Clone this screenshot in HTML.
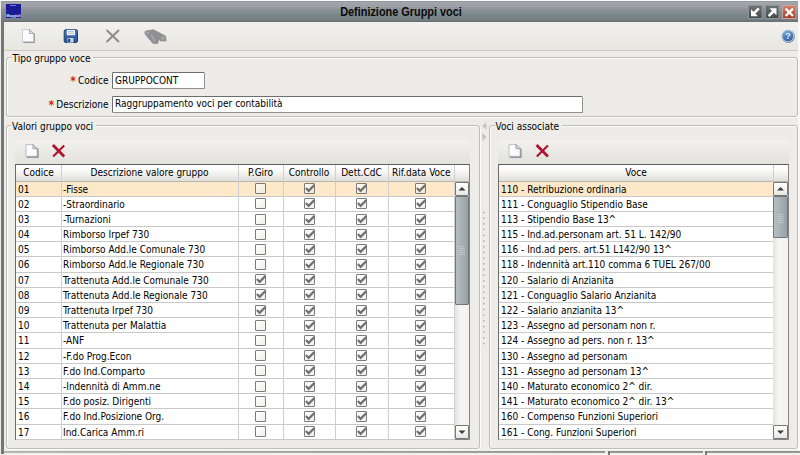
<!DOCTYPE html>
<html lang="it">
<head>
<meta charset="utf-8">
<title>Definizione Gruppi voci</title>
<style>
html,body{margin:0;padding:0;}
body{width:800px;height:455px;overflow:hidden;position:relative;background:#edece8;
 font-family:"DejaVu Sans Condensed","Liberation Sans",sans-serif;font-size:10px;color:#000;}
div,span{box-sizing:border-box;}
.abs,.t,.row,.hl,.vl,.cb,.fs,.lg{position:absolute;}
.t{white-space:nowrap;height:15.2px;}
.row{background:#ffffff;}
.row.sel{background:#fde9c9;}
.hl{height:1px;background:#c9c9c9;}
.hl.hd0{background:#b4b4b0;}
.vl{width:1px;background:#cfcfcf;}
.cb{width:11px;height:11px;border:1px solid #7b7b7b;background:linear-gradient(135deg,rgba(255,255,255,.75),rgba(228,228,226,.6));border-radius:1px;}
.cb svg{position:absolute;left:-1px;top:-1px;}
.fs{border:1px solid #bebdb8;border-radius:3px;box-shadow:inset 1px 1px 0 #fbfbf9, 1px 1px 0 #fbfbf9;}
.lg{background:#edece8;white-space:nowrap;line-height:12px;height:12px;padding:0 3px 0 1px;}
#title{left:0.6px;top:1px;width:798px;height:21px;
 background:linear-gradient(#8f9397 0%,#a1a5ac 7%,#9a9ea5 28%,#8b9196 42%,#848d90 55%,#78858b 70%,#768186 86%,#686f72 100%);}
#titletxt{font-family:"Liberation Sans",sans-serif;left:1.3px;top:1.6px;width:800px;height:21px;line-height:21px;text-align:center;font-weight:bold;font-size:12.5px;transform:scaleX(0.872);transform-origin:50% 50%;color:#0a0a0a;}
#lborder{left:0.5px;top:22px;width:3.5px;height:432px;background:#70787b;}
#toolbar{left:4px;top:22px;width:794px;height:28.5px;background:linear-gradient(#f2f1ee,#e7e6e1);border-bottom:1px solid #cbcac5;}
.mtb{height:24.5px;background:linear-gradient(#f2f1ee 0%,#edece8 30%,#e2e1dc 100%);}
.th{background:linear-gradient(#ffffff 0%,#fbfbfa 30%,#eeedea 65%,#dfded9 100%);border-bottom:1px solid #bdbdb8;}
.tbl{border:1px solid #858585;border-top-color:#5c5c5c;border-left-color:#6c6c6c;background:#fff;}
.hd{text-align:center;line-height:16px;height:16px;top:165.2px;white-space:nowrap;}
.ast{color:#d31c1c;font-weight:bold;font-size:12px;margin-right:2px;vertical-align:-1px;}
.nar{display:inline-block;transform:scaleX(1);transform-origin:0 50%;}
.inp{background:#fff;border:1px solid #8f8f8f;border-top-color:#6e6e6e;border-left-color:#6e6e6e;height:17px;line-height:15px;padding-top:0.4px;padding-left:2.5px;border-radius:1.5px;white-space:nowrap;}
.sbtrack{background:linear-gradient(90deg,#e4e3df,#f6f5f3 40%,#f3f2ef);}
.sbbtn{background:linear-gradient(#ffffff,#f4f4f2 50%,#e6e6e3);border:1px solid #777777;border-radius:1px;}
.thumb{background:linear-gradient(90deg,#b6bec2 0%,#a8b2b6 45%,#98a2a6 100%);border:1px solid #70777a;border-radius:1px;}
</style>
</head>
<body>
<!-- window chrome -->
<div class="abs" style="left:0;top:0;width:800px;height:1px;background:#fbfbfb"></div>
<div class="abs" id="title"></div>
<div class="abs" id="titletxt">Definizione Gruppi voci</div>
<!-- app icon -->
<div class="abs" style="left:5.5px;top:3.8px;width:15.2px;height:14.2px;background:#1b1b96;"></div>
<div class="abs" style="left:6.2px;top:13.8px;width:14.5px;height:4px;font-size:3.6px;line-height:4px;font-weight:bold;color:#e2e6ff;overflow:hidden;font-family:'Liberation Sans',sans-serif">Maggioli</div>
<div class="abs" style="left:10px;top:5px;width:6px;height:1px;background:#6f78d8"></div>
<!-- title buttons -->
<svg class="abs" style="left:748px;top:4.5px" width="50" height="15" viewBox="0 0 50 15">
 <defs>
  <linearGradient id="gb" x1="0" y1="0" x2="0" y2="1"><stop offset="0" stop-color="#6f7577"/><stop offset="1" stop-color="#42484a"/></linearGradient>
  <linearGradient id="gr" x1="0" y1="0" x2="0" y2="1"><stop offset="0" stop-color="#d9826a"/><stop offset="1" stop-color="#a33a2a"/></linearGradient>
 </defs>
 <rect x="0.5" y="0.5" width="13.5" height="13" fill="url(#gb)" stroke="#8d9496" stroke-width="1"/>
 <path d="M3 4.2 V11.2 H10 Z" fill="#fff"/><path d="M5.6 8.6 L10.8 3.4" stroke="#fff" stroke-width="2.6" fill="none"/>
 <rect x="17.5" y="0.5" width="13.5" height="13" fill="url(#gb)" stroke="#8d9496" stroke-width="1"/>
 <path d="M21.5 3.3 H28.5 V10.3 Z" fill="#fff"/><path d="M20.6 11.2 L25.8 6" stroke="#fff" stroke-width="2.6" fill="none"/>
 <rect x="34.5" y="0.5" width="13.5" height="13" fill="url(#gr)" stroke="#c9a79f" stroke-width="1"/>
 <path d="M37.6 3.6 L45 11 M45 3.6 L37.6 11" stroke="#fff" stroke-width="2.2" fill="none"/>
</svg>
<div class="abs" id="lborder"></div>
<div class="abs" style="left:798px;top:0;width:2px;height:455px;background:#f8f8f8"></div>

<!-- toolbar -->
<div class="abs" id="toolbar"></div>
<svg class="abs" style="left:20px;top:27px" width="150" height="20" viewBox="0 0 150 20">
 <!-- new doc -->
 <path d="M14.1 6.3 V15.3 H3.3" fill="none" stroke="#8f8f8f" stroke-width="1.4"/>
 <path d="M2.5 2.5 H9.5 L13.5 6.5 V14.7 H2.5 Z" fill="#fbfcfe" stroke="#bfc3c9" stroke-width="0.8"/>
 <path d="M9.5 2.5 V6.5 H13.5 Z" fill="#e1e5ec" stroke="#9c9c9c" stroke-width="0.8"/>
 <!-- save -->
 <defs><linearGradient id="sv" x1="0" y1="0" x2="0" y2="1"><stop offset="0" stop-color="#4a78b6"/><stop offset="1" stop-color="#27528f"/></linearGradient></defs>
 <rect x="44.2" y="2.7" width="13.3" height="12.8" rx="1.6" fill="url(#sv)" stroke="#1d3c74" stroke-width="1"/>
 <rect x="46.8" y="2.9" width="8.2" height="5.3" fill="#f3f6fa"/>
 <path d="M48 4.6 H54 M48 6.3 H54" stroke="#9fabbf" stroke-width="0.8"/>
 <rect x="47.5" y="11" width="5.9" height="4.6" fill="#ccd6e6"/>
 <rect x="48.1" y="11.8" width="2.2" height="3.3" fill="#1f447e"/>
 <!-- delete (disabled) -->
 <path d="M86.5 3 L99 15 M99 3 L86.5 15" stroke="#8d8d8d" stroke-width="2" fill="none"/>
 <!-- binoculars (disabled) -->
 <path d="M125 4.4 L128 3.5 L133.5 2.8 L145.6 9.1 L146.1 13.9 L140.3 13.9 L138.7 12 L137.7 16.5 L133 16.5 L125 7 Z" fill="#8f8f91" stroke="#8f8f91" stroke-width="0.8" stroke-linejoin="round"/>
 <circle cx="127.6" cy="6" r="1.5" fill="#a9a9ab"/><circle cx="143" cy="11.2" r="1.7" fill="#a9a9ab"/><path d="M131 8 L135 14.5" stroke="#a2a2a8" stroke-width="2.2"/>
</svg>
<!-- help -->
<svg class="abs" style="left:780px;top:28px" width="16" height="16" viewBox="0 0 16 16">
 <defs><linearGradient id="hg" x1="0.2" y1="0" x2="0.6" y2="1"><stop offset="0" stop-color="#8ab4de"/><stop offset="0.5" stop-color="#4f82bc"/><stop offset="1" stop-color="#2f5f98"/></linearGradient></defs>
 <circle cx="8.3" cy="8.4" r="6.5" fill="#6d7a88"/>
 <circle cx="7.9" cy="7.9" r="6" fill="url(#hg)" stroke="#c6d6e8" stroke-width="1"/>
 <text x="7.9" y="11.1" text-anchor="middle" font-family="Liberation Sans, sans-serif" font-weight="bold" font-size="9.5" fill="#dcecfb">?</text>
</svg>

<!-- fieldset 1 -->
<div class="fs" style="left:5.5px;top:56.5px;width:792.5px;height:60.6px"></div>
<div class="lg" style="left:11.5px;top:53px">Tipo gruppo voce</div>
<div class="t" style="left:60px;top:72.8px;width:48.5px;text-align:right;line-height:15.2px"><span class="ast">*</span>Codice</div>
<div class="t" style="left:30px;top:96.8px;width:78.5px;text-align:right;line-height:15.2px"><span class="ast">*</span>Descrizione</div>
<div class="abs inp" style="left:111.5px;top:72px;height:16.5px;width:93.5px"><span class="nar">GRUPPOCONT</span></div>
<div class="abs inp" style="left:111.5px;top:95.5px;padding-top:0;line-height:14.6px;width:471.5px">Raggruppamento voci per contabilità</div>

<!-- fieldset 2 -->
<div class="fs" style="left:5.5px;top:125px;width:474.5px;height:323.5px"></div>
<div class="lg" style="left:11px;top:120.5px">Valori gruppo voci</div>
<div class="abs mtb" style="left:15px;top:139.5px;width:455px"></div>
<svg class="abs" style="left:22px;top:142px" width="50" height="18" viewBox="0 0 50 18">
 <path d="M15.8 6.6 V15 H4.8" fill="none" stroke="#7c7c7c" stroke-width="1.4"/>
 <path d="M4 2.6 H11 L15.1 6.7 V14.3 H4 Z" fill="#fbfcfe" stroke="#aeb2b8" stroke-width="0.8"/>
 <path d="M11 2.6 V6.7 H15.1 Z" fill="#e1e5ec" stroke="#8c8c8c" stroke-width="0.8"/>
 <path d="M30.9 2.9 L42.2 14.5" stroke="#b01330" stroke-width="2.8" fill="none"/><path d="M42.2 3.6 L31.1 14.5" stroke="#b01330" stroke-width="2.1" fill="none"/>
</svg>

<!-- splitter -->
<svg class="abs" style="left:481px;top:120px" width="9" height="325" viewBox="0 0 9 325">
 <path d="M5.3 2.4 L1.2 5.9 L5.3 9.4 Z" fill="#c2c2be"/>
 <path d="M1.4 13.2 L5.5 17 L1.4 20.8 Z" fill="#c2c2be"/>
 <circle cx="2.8" cy="92.5" r="0.9" fill="#b2b2ae"/><circle cx="2.8" cy="98.2" r="0.9" fill="#b2b2ae"/><circle cx="2.8" cy="103.9" r="0.9" fill="#b2b2ae"/><circle cx="2.8" cy="109.6" r="0.9" fill="#b2b2ae"/><circle cx="2.8" cy="115.3" r="0.9" fill="#b2b2ae"/><circle cx="2.8" cy="121.0" r="0.9" fill="#b2b2ae"/><circle cx="2.8" cy="126.7" r="0.9" fill="#b2b2ae"/><circle cx="2.8" cy="132.4" r="0.9" fill="#b2b2ae"/><circle cx="2.8" cy="138.1" r="0.9" fill="#b2b2ae"/><circle cx="2.8" cy="143.8" r="0.9" fill="#b2b2ae"/><circle cx="2.8" cy="149.5" r="0.9" fill="#b2b2ae"/><circle cx="2.8" cy="155.2" r="0.9" fill="#b2b2ae"/><circle cx="2.8" cy="160.9" r="0.9" fill="#b2b2ae"/><circle cx="2.8" cy="166.6" r="0.9" fill="#b2b2ae"/><circle cx="2.8" cy="172.3" r="0.9" fill="#b2b2ae"/><circle cx="2.8" cy="178.0" r="0.9" fill="#b2b2ae"/><circle cx="2.8" cy="183.7" r="0.9" fill="#b2b2ae"/><circle cx="2.8" cy="189.4" r="0.9" fill="#b2b2ae"/><circle cx="2.8" cy="195.1" r="0.9" fill="#b2b2ae"/><circle cx="2.8" cy="200.8" r="0.9" fill="#b2b2ae"/><circle cx="2.8" cy="206.5" r="0.9" fill="#b2b2ae"/><circle cx="2.8" cy="212.2" r="0.9" fill="#b2b2ae"/><circle cx="2.8" cy="217.9" r="0.9" fill="#b2b2ae"/><circle cx="2.8" cy="223.6" r="0.9" fill="#b2b2ae"/>
</svg>

<!-- fieldset 3 -->
<div class="fs" style="left:489px;top:125px;width:309px;height:323.5px"></div>
<div class="lg" style="left:494.5px;top:120.5px">Voci associate</div>
<div class="abs mtb" style="left:498px;top:139.5px;width:290.5px"></div>
<svg class="abs" style="left:505px;top:142px" width="50" height="18" viewBox="0 0 50 18">
 <path d="M15.8 6.6 V15 H4.8" fill="none" stroke="#7c7c7c" stroke-width="1.4"/>
 <path d="M4 2.6 H11 L15.1 6.7 V14.3 H4 Z" fill="#fbfcfe" stroke="#aeb2b8" stroke-width="0.8"/>
 <path d="M11 2.6 V6.7 H15.1 Z" fill="#e1e5ec" stroke="#8c8c8c" stroke-width="0.8"/>
 <path d="M31.6 2.9 L42.9 14.5" stroke="#b01330" stroke-width="2.8" fill="none"/><path d="M42.9 3.6 L31.8 14.5" stroke="#b01330" stroke-width="2.1" fill="none"/>
</svg>

<!-- left table -->
<div class="abs tbl" style="left:15px;top:164px;width:455px;height:276px"></div>
<div class="abs th" style="left:16px;top:165px;width:453px;height:17px"></div>
<!-- right table -->
<div class="abs tbl" style="left:498px;top:164px;width:290.5px;height:276px"></div>
<div class="abs th" style="left:499px;top:165px;width:288.5px;height:17px"></div>

<div class="row sel" style="left:16px;top:181.0px;width:439px;height:15.19px"></div>
<div class="t" style="left:18px;top:181.5px;line-height:15.19px">01</div>
<div class="t" style="left:63px;top:181.5px;line-height:15.19px">-Fisse</div>
<div class="cb" style="left:255.0px;top:183.1px"></div>
<div class="cb" style="left:303.8px;top:183.1px"><svg width="11" height="11" viewBox="0 0 11 11"><path d="M1.9 5.1 L4.6 7.9 L10.4 2.1" fill="none" stroke="#6f6f6f" stroke-width="2.2"/></svg></div>
<div class="cb" style="left:355.8px;top:183.1px"><svg width="11" height="11" viewBox="0 0 11 11"><path d="M1.9 5.1 L4.6 7.9 L10.4 2.1" fill="none" stroke="#6f6f6f" stroke-width="2.2"/></svg></div>
<div class="cb" style="left:415.1px;top:183.1px"><svg width="11" height="11" viewBox="0 0 11 11"><path d="M1.9 5.1 L4.6 7.9 L10.4 2.1" fill="none" stroke="#6f6f6f" stroke-width="2.2"/></svg></div>
<div class="row" style="left:16px;top:196.2px;width:439px;height:15.19px"></div>
<div class="t" style="left:18px;top:196.7px;line-height:15.19px">02</div>
<div class="t" style="left:63px;top:196.7px;line-height:15.19px">-Straordinario</div>
<div class="cb" style="left:255.0px;top:198.3px"></div>
<div class="cb" style="left:303.8px;top:198.3px"><svg width="11" height="11" viewBox="0 0 11 11"><path d="M1.9 5.1 L4.6 7.9 L10.4 2.1" fill="none" stroke="#6f6f6f" stroke-width="2.2"/></svg></div>
<div class="cb" style="left:355.8px;top:198.3px"><svg width="11" height="11" viewBox="0 0 11 11"><path d="M1.9 5.1 L4.6 7.9 L10.4 2.1" fill="none" stroke="#6f6f6f" stroke-width="2.2"/></svg></div>
<div class="cb" style="left:415.1px;top:198.3px"><svg width="11" height="11" viewBox="0 0 11 11"><path d="M1.9 5.1 L4.6 7.9 L10.4 2.1" fill="none" stroke="#6f6f6f" stroke-width="2.2"/></svg></div>
<div class="row" style="left:16px;top:211.4px;width:439px;height:15.19px"></div>
<div class="t" style="left:18px;top:211.9px;line-height:15.19px">03</div>
<div class="t" style="left:63px;top:211.9px;line-height:15.19px">-Turnazioni</div>
<div class="cb" style="left:255.0px;top:213.5px"></div>
<div class="cb" style="left:303.8px;top:213.5px"><svg width="11" height="11" viewBox="0 0 11 11"><path d="M1.9 5.1 L4.6 7.9 L10.4 2.1" fill="none" stroke="#6f6f6f" stroke-width="2.2"/></svg></div>
<div class="cb" style="left:355.8px;top:213.5px"><svg width="11" height="11" viewBox="0 0 11 11"><path d="M1.9 5.1 L4.6 7.9 L10.4 2.1" fill="none" stroke="#6f6f6f" stroke-width="2.2"/></svg></div>
<div class="cb" style="left:415.1px;top:213.5px"><svg width="11" height="11" viewBox="0 0 11 11"><path d="M1.9 5.1 L4.6 7.9 L10.4 2.1" fill="none" stroke="#6f6f6f" stroke-width="2.2"/></svg></div>
<div class="row" style="left:16px;top:226.6px;width:439px;height:15.19px"></div>
<div class="t" style="left:18px;top:227.1px;line-height:15.19px">04</div>
<div class="t" style="left:63px;top:227.1px;line-height:15.19px">Rimborso Irpef 730</div>
<div class="cb" style="left:255.0px;top:228.7px"></div>
<div class="cb" style="left:303.8px;top:228.7px"><svg width="11" height="11" viewBox="0 0 11 11"><path d="M1.9 5.1 L4.6 7.9 L10.4 2.1" fill="none" stroke="#6f6f6f" stroke-width="2.2"/></svg></div>
<div class="cb" style="left:355.8px;top:228.7px"><svg width="11" height="11" viewBox="0 0 11 11"><path d="M1.9 5.1 L4.6 7.9 L10.4 2.1" fill="none" stroke="#6f6f6f" stroke-width="2.2"/></svg></div>
<div class="cb" style="left:415.1px;top:228.7px"><svg width="11" height="11" viewBox="0 0 11 11"><path d="M1.9 5.1 L4.6 7.9 L10.4 2.1" fill="none" stroke="#6f6f6f" stroke-width="2.2"/></svg></div>
<div class="row" style="left:16px;top:241.8px;width:439px;height:15.19px"></div>
<div class="t" style="left:18px;top:242.3px;line-height:15.19px">05</div>
<div class="t" style="left:63px;top:242.3px;line-height:15.19px">Rimborso Add.le Comunale 730</div>
<div class="cb" style="left:255.0px;top:243.9px"></div>
<div class="cb" style="left:303.8px;top:243.9px"><svg width="11" height="11" viewBox="0 0 11 11"><path d="M1.9 5.1 L4.6 7.9 L10.4 2.1" fill="none" stroke="#6f6f6f" stroke-width="2.2"/></svg></div>
<div class="cb" style="left:355.8px;top:243.9px"><svg width="11" height="11" viewBox="0 0 11 11"><path d="M1.9 5.1 L4.6 7.9 L10.4 2.1" fill="none" stroke="#6f6f6f" stroke-width="2.2"/></svg></div>
<div class="cb" style="left:415.1px;top:243.9px"><svg width="11" height="11" viewBox="0 0 11 11"><path d="M1.9 5.1 L4.6 7.9 L10.4 2.1" fill="none" stroke="#6f6f6f" stroke-width="2.2"/></svg></div>
<div class="row" style="left:16px;top:256.9px;width:439px;height:15.19px"></div>
<div class="t" style="left:18px;top:257.4px;line-height:15.19px">06</div>
<div class="t" style="left:63px;top:257.4px;line-height:15.19px">Rimborso Add.le Regionale 730</div>
<div class="cb" style="left:255.0px;top:259.0px"></div>
<div class="cb" style="left:303.8px;top:259.0px"><svg width="11" height="11" viewBox="0 0 11 11"><path d="M1.9 5.1 L4.6 7.9 L10.4 2.1" fill="none" stroke="#6f6f6f" stroke-width="2.2"/></svg></div>
<div class="cb" style="left:355.8px;top:259.0px"><svg width="11" height="11" viewBox="0 0 11 11"><path d="M1.9 5.1 L4.6 7.9 L10.4 2.1" fill="none" stroke="#6f6f6f" stroke-width="2.2"/></svg></div>
<div class="cb" style="left:415.1px;top:259.0px"><svg width="11" height="11" viewBox="0 0 11 11"><path d="M1.9 5.1 L4.6 7.9 L10.4 2.1" fill="none" stroke="#6f6f6f" stroke-width="2.2"/></svg></div>
<div class="row" style="left:16px;top:272.1px;width:439px;height:15.19px"></div>
<div class="t" style="left:18px;top:272.6px;line-height:15.19px">07</div>
<div class="t" style="left:63px;top:272.6px;line-height:15.19px">Trattenuta Add.le Comunale 730</div>
<div class="cb" style="left:255.0px;top:274.2px"><svg width="11" height="11" viewBox="0 0 11 11"><path d="M1.9 5.1 L4.6 7.9 L10.4 2.1" fill="none" stroke="#6f6f6f" stroke-width="2.2"/></svg></div>
<div class="cb" style="left:303.8px;top:274.2px"><svg width="11" height="11" viewBox="0 0 11 11"><path d="M1.9 5.1 L4.6 7.9 L10.4 2.1" fill="none" stroke="#6f6f6f" stroke-width="2.2"/></svg></div>
<div class="cb" style="left:355.8px;top:274.2px"><svg width="11" height="11" viewBox="0 0 11 11"><path d="M1.9 5.1 L4.6 7.9 L10.4 2.1" fill="none" stroke="#6f6f6f" stroke-width="2.2"/></svg></div>
<div class="cb" style="left:415.1px;top:274.2px"><svg width="11" height="11" viewBox="0 0 11 11"><path d="M1.9 5.1 L4.6 7.9 L10.4 2.1" fill="none" stroke="#6f6f6f" stroke-width="2.2"/></svg></div>
<div class="row" style="left:16px;top:287.3px;width:439px;height:15.19px"></div>
<div class="t" style="left:18px;top:287.8px;line-height:15.19px">08</div>
<div class="t" style="left:63px;top:287.8px;line-height:15.19px">Trattenuta Add.le Regionale 730</div>
<div class="cb" style="left:255.0px;top:289.4px"><svg width="11" height="11" viewBox="0 0 11 11"><path d="M1.9 5.1 L4.6 7.9 L10.4 2.1" fill="none" stroke="#6f6f6f" stroke-width="2.2"/></svg></div>
<div class="cb" style="left:303.8px;top:289.4px"><svg width="11" height="11" viewBox="0 0 11 11"><path d="M1.9 5.1 L4.6 7.9 L10.4 2.1" fill="none" stroke="#6f6f6f" stroke-width="2.2"/></svg></div>
<div class="cb" style="left:355.8px;top:289.4px"><svg width="11" height="11" viewBox="0 0 11 11"><path d="M1.9 5.1 L4.6 7.9 L10.4 2.1" fill="none" stroke="#6f6f6f" stroke-width="2.2"/></svg></div>
<div class="cb" style="left:415.1px;top:289.4px"><svg width="11" height="11" viewBox="0 0 11 11"><path d="M1.9 5.1 L4.6 7.9 L10.4 2.1" fill="none" stroke="#6f6f6f" stroke-width="2.2"/></svg></div>
<div class="row" style="left:16px;top:302.5px;width:439px;height:15.19px"></div>
<div class="t" style="left:18px;top:303.0px;line-height:15.19px">09</div>
<div class="t" style="left:63px;top:303.0px;line-height:15.19px">Trattenuta Irpef 730</div>
<div class="cb" style="left:255.0px;top:304.6px"><svg width="11" height="11" viewBox="0 0 11 11"><path d="M1.9 5.1 L4.6 7.9 L10.4 2.1" fill="none" stroke="#6f6f6f" stroke-width="2.2"/></svg></div>
<div class="cb" style="left:303.8px;top:304.6px"><svg width="11" height="11" viewBox="0 0 11 11"><path d="M1.9 5.1 L4.6 7.9 L10.4 2.1" fill="none" stroke="#6f6f6f" stroke-width="2.2"/></svg></div>
<div class="cb" style="left:355.8px;top:304.6px"><svg width="11" height="11" viewBox="0 0 11 11"><path d="M1.9 5.1 L4.6 7.9 L10.4 2.1" fill="none" stroke="#6f6f6f" stroke-width="2.2"/></svg></div>
<div class="cb" style="left:415.1px;top:304.6px"><svg width="11" height="11" viewBox="0 0 11 11"><path d="M1.9 5.1 L4.6 7.9 L10.4 2.1" fill="none" stroke="#6f6f6f" stroke-width="2.2"/></svg></div>
<div class="row" style="left:16px;top:317.7px;width:439px;height:15.19px"></div>
<div class="t" style="left:18px;top:318.2px;line-height:15.19px">10</div>
<div class="t" style="left:63px;top:318.2px;line-height:15.19px">Trattenuta per Malattia</div>
<div class="cb" style="left:255.0px;top:319.8px"></div>
<div class="cb" style="left:303.8px;top:319.8px"><svg width="11" height="11" viewBox="0 0 11 11"><path d="M1.9 5.1 L4.6 7.9 L10.4 2.1" fill="none" stroke="#6f6f6f" stroke-width="2.2"/></svg></div>
<div class="cb" style="left:355.8px;top:319.8px"><svg width="11" height="11" viewBox="0 0 11 11"><path d="M1.9 5.1 L4.6 7.9 L10.4 2.1" fill="none" stroke="#6f6f6f" stroke-width="2.2"/></svg></div>
<div class="cb" style="left:415.1px;top:319.8px"><svg width="11" height="11" viewBox="0 0 11 11"><path d="M1.9 5.1 L4.6 7.9 L10.4 2.1" fill="none" stroke="#6f6f6f" stroke-width="2.2"/></svg></div>
<div class="row" style="left:16px;top:332.9px;width:439px;height:15.19px"></div>
<div class="t" style="left:18px;top:333.4px;line-height:15.19px">11</div>
<div class="t" style="left:63px;top:333.4px;line-height:15.19px">-ANF</div>
<div class="cb" style="left:255.0px;top:335.0px"></div>
<div class="cb" style="left:303.8px;top:335.0px"><svg width="11" height="11" viewBox="0 0 11 11"><path d="M1.9 5.1 L4.6 7.9 L10.4 2.1" fill="none" stroke="#6f6f6f" stroke-width="2.2"/></svg></div>
<div class="cb" style="left:355.8px;top:335.0px"><svg width="11" height="11" viewBox="0 0 11 11"><path d="M1.9 5.1 L4.6 7.9 L10.4 2.1" fill="none" stroke="#6f6f6f" stroke-width="2.2"/></svg></div>
<div class="cb" style="left:415.1px;top:335.0px"><svg width="11" height="11" viewBox="0 0 11 11"><path d="M1.9 5.1 L4.6 7.9 L10.4 2.1" fill="none" stroke="#6f6f6f" stroke-width="2.2"/></svg></div>
<div class="row" style="left:16px;top:348.1px;width:439px;height:15.19px"></div>
<div class="t" style="left:18px;top:348.6px;line-height:15.19px">12</div>
<div class="t" style="left:63px;top:348.6px;line-height:15.19px">-F.do Prog.Econ</div>
<div class="cb" style="left:255.0px;top:350.2px"></div>
<div class="cb" style="left:303.8px;top:350.2px"><svg width="11" height="11" viewBox="0 0 11 11"><path d="M1.9 5.1 L4.6 7.9 L10.4 2.1" fill="none" stroke="#6f6f6f" stroke-width="2.2"/></svg></div>
<div class="cb" style="left:355.8px;top:350.2px"><svg width="11" height="11" viewBox="0 0 11 11"><path d="M1.9 5.1 L4.6 7.9 L10.4 2.1" fill="none" stroke="#6f6f6f" stroke-width="2.2"/></svg></div>
<div class="cb" style="left:415.1px;top:350.2px"><svg width="11" height="11" viewBox="0 0 11 11"><path d="M1.9 5.1 L4.6 7.9 L10.4 2.1" fill="none" stroke="#6f6f6f" stroke-width="2.2"/></svg></div>
<div class="row" style="left:16px;top:363.3px;width:439px;height:15.19px"></div>
<div class="t" style="left:18px;top:363.8px;line-height:15.19px">13</div>
<div class="t" style="left:63px;top:363.8px;line-height:15.19px">F.do Ind.Comparto</div>
<div class="cb" style="left:255.0px;top:365.4px"></div>
<div class="cb" style="left:303.8px;top:365.4px"><svg width="11" height="11" viewBox="0 0 11 11"><path d="M1.9 5.1 L4.6 7.9 L10.4 2.1" fill="none" stroke="#6f6f6f" stroke-width="2.2"/></svg></div>
<div class="cb" style="left:355.8px;top:365.4px"><svg width="11" height="11" viewBox="0 0 11 11"><path d="M1.9 5.1 L4.6 7.9 L10.4 2.1" fill="none" stroke="#6f6f6f" stroke-width="2.2"/></svg></div>
<div class="cb" style="left:415.1px;top:365.4px"><svg width="11" height="11" viewBox="0 0 11 11"><path d="M1.9 5.1 L4.6 7.9 L10.4 2.1" fill="none" stroke="#6f6f6f" stroke-width="2.2"/></svg></div>
<div class="row" style="left:16px;top:378.5px;width:439px;height:15.19px"></div>
<div class="t" style="left:18px;top:379.0px;line-height:15.19px">14</div>
<div class="t" style="left:63px;top:379.0px;line-height:15.19px">-Indennità di Amm.ne</div>
<div class="cb" style="left:255.0px;top:380.6px"></div>
<div class="cb" style="left:303.8px;top:380.6px"><svg width="11" height="11" viewBox="0 0 11 11"><path d="M1.9 5.1 L4.6 7.9 L10.4 2.1" fill="none" stroke="#6f6f6f" stroke-width="2.2"/></svg></div>
<div class="cb" style="left:355.8px;top:380.6px"><svg width="11" height="11" viewBox="0 0 11 11"><path d="M1.9 5.1 L4.6 7.9 L10.4 2.1" fill="none" stroke="#6f6f6f" stroke-width="2.2"/></svg></div>
<div class="cb" style="left:415.1px;top:380.6px"><svg width="11" height="11" viewBox="0 0 11 11"><path d="M1.9 5.1 L4.6 7.9 L10.4 2.1" fill="none" stroke="#6f6f6f" stroke-width="2.2"/></svg></div>
<div class="row" style="left:16px;top:393.7px;width:439px;height:15.19px"></div>
<div class="t" style="left:18px;top:394.2px;line-height:15.19px">15</div>
<div class="t" style="left:63px;top:394.2px;line-height:15.19px">F.do posiz. Dirigenti</div>
<div class="cb" style="left:255.0px;top:395.8px"></div>
<div class="cb" style="left:303.8px;top:395.8px"><svg width="11" height="11" viewBox="0 0 11 11"><path d="M1.9 5.1 L4.6 7.9 L10.4 2.1" fill="none" stroke="#6f6f6f" stroke-width="2.2"/></svg></div>
<div class="cb" style="left:355.8px;top:395.8px"><svg width="11" height="11" viewBox="0 0 11 11"><path d="M1.9 5.1 L4.6 7.9 L10.4 2.1" fill="none" stroke="#6f6f6f" stroke-width="2.2"/></svg></div>
<div class="cb" style="left:415.1px;top:395.8px"><svg width="11" height="11" viewBox="0 0 11 11"><path d="M1.9 5.1 L4.6 7.9 L10.4 2.1" fill="none" stroke="#6f6f6f" stroke-width="2.2"/></svg></div>
<div class="row" style="left:16px;top:408.9px;width:439px;height:15.19px"></div>
<div class="t" style="left:18px;top:409.4px;line-height:15.19px">16</div>
<div class="t" style="left:63px;top:409.4px;line-height:15.19px">F.do Ind.Posizione Org.</div>
<div class="cb" style="left:255.0px;top:410.9px"></div>
<div class="cb" style="left:303.8px;top:410.9px"><svg width="11" height="11" viewBox="0 0 11 11"><path d="M1.9 5.1 L4.6 7.9 L10.4 2.1" fill="none" stroke="#6f6f6f" stroke-width="2.2"/></svg></div>
<div class="cb" style="left:355.8px;top:410.9px"><svg width="11" height="11" viewBox="0 0 11 11"><path d="M1.9 5.1 L4.6 7.9 L10.4 2.1" fill="none" stroke="#6f6f6f" stroke-width="2.2"/></svg></div>
<div class="cb" style="left:415.1px;top:410.9px"><svg width="11" height="11" viewBox="0 0 11 11"><path d="M1.9 5.1 L4.6 7.9 L10.4 2.1" fill="none" stroke="#6f6f6f" stroke-width="2.2"/></svg></div>
<div class="row" style="left:16px;top:424.0px;width:439px;height:15.19px"></div>
<div class="t" style="left:18px;top:424.5px;line-height:15.19px">17</div>
<div class="t" style="left:63px;top:424.5px;line-height:15.19px">Ind.Carica Amm.ri</div>
<div class="cb" style="left:255.0px;top:426.1px"></div>
<div class="cb" style="left:303.8px;top:426.1px"><svg width="11" height="11" viewBox="0 0 11 11"><path d="M1.9 5.1 L4.6 7.9 L10.4 2.1" fill="none" stroke="#6f6f6f" stroke-width="2.2"/></svg></div>
<div class="cb" style="left:355.8px;top:426.1px"><svg width="11" height="11" viewBox="0 0 11 11"><path d="M1.9 5.1 L4.6 7.9 L10.4 2.1" fill="none" stroke="#6f6f6f" stroke-width="2.2"/></svg></div>
<div class="cb" style="left:415.1px;top:426.1px"><svg width="11" height="11" viewBox="0 0 11 11"><path d="M1.9 5.1 L4.6 7.9 L10.4 2.1" fill="none" stroke="#6f6f6f" stroke-width="2.2"/></svg></div>
<div class="row sel" style="left:499px;top:181.0px;width:274px;height:15.19px"></div>
<div class="t" style="left:501px;top:181.5px;line-height:15.19px">110 - Retribuzione ordinaria</div>
<div class="row" style="left:499px;top:196.2px;width:274px;height:15.19px"></div>
<div class="t" style="left:501px;top:196.7px;line-height:15.19px">111 - Conguaglio Stipendio Base</div>
<div class="row" style="left:499px;top:211.4px;width:274px;height:15.19px"></div>
<div class="t" style="left:501px;top:211.9px;line-height:15.19px">113 - Stipendio Base 13^</div>
<div class="row" style="left:499px;top:226.6px;width:274px;height:15.19px"></div>
<div class="t" style="left:501px;top:227.1px;line-height:15.19px">115 - Ind.ad.personam art. 51 L. 142/90</div>
<div class="row" style="left:499px;top:241.8px;width:274px;height:15.19px"></div>
<div class="t" style="left:501px;top:242.3px;line-height:15.19px">116 - Ind.ad pers. art.51 L142/90 13^</div>
<div class="row" style="left:499px;top:256.9px;width:274px;height:15.19px"></div>
<div class="t" style="left:501px;top:257.4px;line-height:15.19px">118 - Indennità art.110 comma 6 TUEL 267/00</div>
<div class="row" style="left:499px;top:272.1px;width:274px;height:15.19px"></div>
<div class="t" style="left:501px;top:272.6px;line-height:15.19px">120 - Salario di Anzianita</div>
<div class="row" style="left:499px;top:287.3px;width:274px;height:15.19px"></div>
<div class="t" style="left:501px;top:287.8px;line-height:15.19px">121 - Conguaglio Salario Anzianita</div>
<div class="row" style="left:499px;top:302.5px;width:274px;height:15.19px"></div>
<div class="t" style="left:501px;top:303.0px;line-height:15.19px">122 - Salario anzianita 13^</div>
<div class="row" style="left:499px;top:317.7px;width:274px;height:15.19px"></div>
<div class="t" style="left:501px;top:318.2px;line-height:15.19px">123 - Assegno ad personam non r.</div>
<div class="row" style="left:499px;top:332.9px;width:274px;height:15.19px"></div>
<div class="t" style="left:501px;top:333.4px;line-height:15.19px">124 - Assegno ad pers. non r. 13^</div>
<div class="row" style="left:499px;top:348.1px;width:274px;height:15.19px"></div>
<div class="t" style="left:501px;top:348.6px;line-height:15.19px">130 - Assegno ad personam</div>
<div class="row" style="left:499px;top:363.3px;width:274px;height:15.19px"></div>
<div class="t" style="left:501px;top:363.8px;line-height:15.19px">131 - Assegno ad personam 13^</div>
<div class="row" style="left:499px;top:378.5px;width:274px;height:15.19px"></div>
<div class="t" style="left:501px;top:379.0px;line-height:15.19px">140 - Maturato economico 2^ dir.</div>
<div class="row" style="left:499px;top:393.7px;width:274px;height:15.19px"></div>
<div class="t" style="left:501px;top:394.2px;line-height:15.19px">141 - Maturato economico 2^ dir. 13^</div>
<div class="row" style="left:499px;top:408.9px;width:274px;height:15.19px"></div>
<div class="t" style="left:501px;top:409.4px;line-height:15.19px">160 - Compenso Funzioni Superiori</div>
<div class="row" style="left:499px;top:424.0px;width:274px;height:15.19px"></div>
<div class="t" style="left:501px;top:424.5px;line-height:15.19px">161 - Cong. Funzioni Superiori</div>
<div class="hl hd0" style="left:16px;top:180.5px;width:453px"></div>
<div class="hl hd0" style="left:499px;top:180.5px;width:288.5px"></div>
<div class="hl" style="left:16px;top:195.7px;width:439px"></div>
<div class="hl" style="left:499px;top:195.7px;width:274px"></div>
<div class="hl" style="left:16px;top:210.9px;width:439px"></div>
<div class="hl" style="left:499px;top:210.9px;width:274px"></div>
<div class="hl" style="left:16px;top:226.1px;width:439px"></div>
<div class="hl" style="left:499px;top:226.1px;width:274px"></div>
<div class="hl" style="left:16px;top:241.3px;width:439px"></div>
<div class="hl" style="left:499px;top:241.3px;width:274px"></div>
<div class="hl" style="left:16px;top:256.4px;width:439px"></div>
<div class="hl" style="left:499px;top:256.4px;width:274px"></div>
<div class="hl" style="left:16px;top:271.6px;width:439px"></div>
<div class="hl" style="left:499px;top:271.6px;width:274px"></div>
<div class="hl" style="left:16px;top:286.8px;width:439px"></div>
<div class="hl" style="left:499px;top:286.8px;width:274px"></div>
<div class="hl" style="left:16px;top:302.0px;width:439px"></div>
<div class="hl" style="left:499px;top:302.0px;width:274px"></div>
<div class="hl" style="left:16px;top:317.2px;width:439px"></div>
<div class="hl" style="left:499px;top:317.2px;width:274px"></div>
<div class="hl" style="left:16px;top:332.4px;width:439px"></div>
<div class="hl" style="left:499px;top:332.4px;width:274px"></div>
<div class="hl" style="left:16px;top:347.6px;width:439px"></div>
<div class="hl" style="left:499px;top:347.6px;width:274px"></div>
<div class="hl" style="left:16px;top:362.8px;width:439px"></div>
<div class="hl" style="left:499px;top:362.8px;width:274px"></div>
<div class="hl" style="left:16px;top:378.0px;width:439px"></div>
<div class="hl" style="left:499px;top:378.0px;width:274px"></div>
<div class="hl" style="left:16px;top:393.2px;width:439px"></div>
<div class="hl" style="left:499px;top:393.2px;width:274px"></div>
<div class="hl" style="left:16px;top:408.4px;width:439px"></div>
<div class="hl" style="left:499px;top:408.4px;width:274px"></div>
<div class="hl" style="left:16px;top:423.5px;width:439px"></div>
<div class="hl" style="left:499px;top:423.5px;width:274px"></div>
<div class="hl" style="left:16px;top:438.7px;width:439px"></div>
<div class="hl" style="left:499px;top:438.7px;width:274px"></div>
<div class="vl" style="left:60.5px;top:164.5px;height:274.5px"></div>
<div class="vl" style="left:237.8px;top:164.5px;height:274.5px"></div>
<div class="vl" style="left:282.8px;top:164.5px;height:274.5px"></div>
<div class="vl" style="left:334.5px;top:164.5px;height:274.5px"></div>
<div class="vl" style="left:387.5px;top:164.5px;height:274.5px"></div>
<div class="vl" style="left:454.0px;top:164.5px;height:274.5px"></div>
<div class="vl" style="left:772.5px;top:164.5px;height:274.5px"></div>

<!-- headers -->
<div class="abs hd" style="left:16px;width:45px">Codice</div>
<div class="abs hd" style="left:61px;width:177px">Descrizione valore gruppo</div>
<div class="abs hd" style="left:238px;width:45px">P.Giro</div>
<div class="abs hd" style="left:283px;width:52px">Controllo</div>
<div class="abs hd" style="left:335px;width:53px">Dett.CdC</div>
<div class="abs hd" style="left:388px;width:66.5px">Rif.data Voce</div>
<div class="abs hd" style="left:499px;width:274px">Voce</div>

<!-- left scrollbar -->
<div class="abs sbtrack" style="left:455px;top:182px;width:14px;height:257px"></div>
<div class="abs sbbtn" style="left:455px;top:182px;width:14px;height:13.5px"></div>
<div class="abs sbbtn" style="left:455px;top:425px;width:14px;height:13.5px"></div>
<div class="abs thumb" style="left:455px;top:196px;width:14px;height:109px"></div>
<svg class="abs" style="left:455px;top:182px" width="14" height="257" viewBox="0 0 14 257">
 <path d="M3.5 8.5 L7 5 L10.5 8.5 Z" fill="#3c3c3c"/>
 <path d="M3.5 248.5 L7 252 L10.5 248.5 Z" fill="#3c3c3c"/>
 <path d="M4 64.5 H10 M4 66.5 H10 M4 68.5 H10 M4 70.5 H10 M4 72.5 H10" stroke="#c4cacc" stroke-width="0.8"/>
</svg>
<!-- right scrollbar -->
<div class="abs sbtrack" style="left:773px;top:182px;width:14.5px;height:257px"></div>
<div class="abs sbbtn" style="left:773px;top:182px;width:14.5px;height:13.5px"></div>
<div class="abs sbbtn" style="left:773px;top:425px;width:14.5px;height:13.5px"></div>
<div class="abs thumb" style="left:773px;top:196px;width:14.5px;height:42px"></div>
<svg class="abs" style="left:773px;top:182px" width="15" height="257" viewBox="0 0 15 257">
 <path d="M4 8.5 L7.5 5 L11 8.5 Z" fill="#3c3c3c"/>
 <path d="M4 248.5 L7.5 252 L11 248.5 Z" fill="#3c3c3c"/>
 <path d="M4.5 32.5 H10.5 M4.5 34.5 H10.5 M4.5 36.5 H10.5 M4.5 38.5 H10.5 M4.5 40.5 H10.5" stroke="#c4cacc" stroke-width="0.8"/>
</svg>

<!-- bottom status edge -->
<div class="abs" style="left:4px;top:453.4px;width:796px;height:2px;background:#f1f1ef"></div>
<div class="abs" style="left:4px;top:451px;width:601px;height:2.4px;background:linear-gradient(90deg,#b6b6b3,#979794)"></div>
<div class="abs" style="left:608px;top:451px;width:94.5px;height:2.4px;background:#959592"></div>
<div class="abs" style="left:608px;top:451px;width:1.5px;height:4px;background:#77777a"></div>
<div class="abs" style="left:705px;top:451px;width:95px;height:2.4px;background:#959592"></div>
<div class="abs" style="left:705px;top:451px;width:1.5px;height:4px;background:#77777a"></div>
</body>
</html>
